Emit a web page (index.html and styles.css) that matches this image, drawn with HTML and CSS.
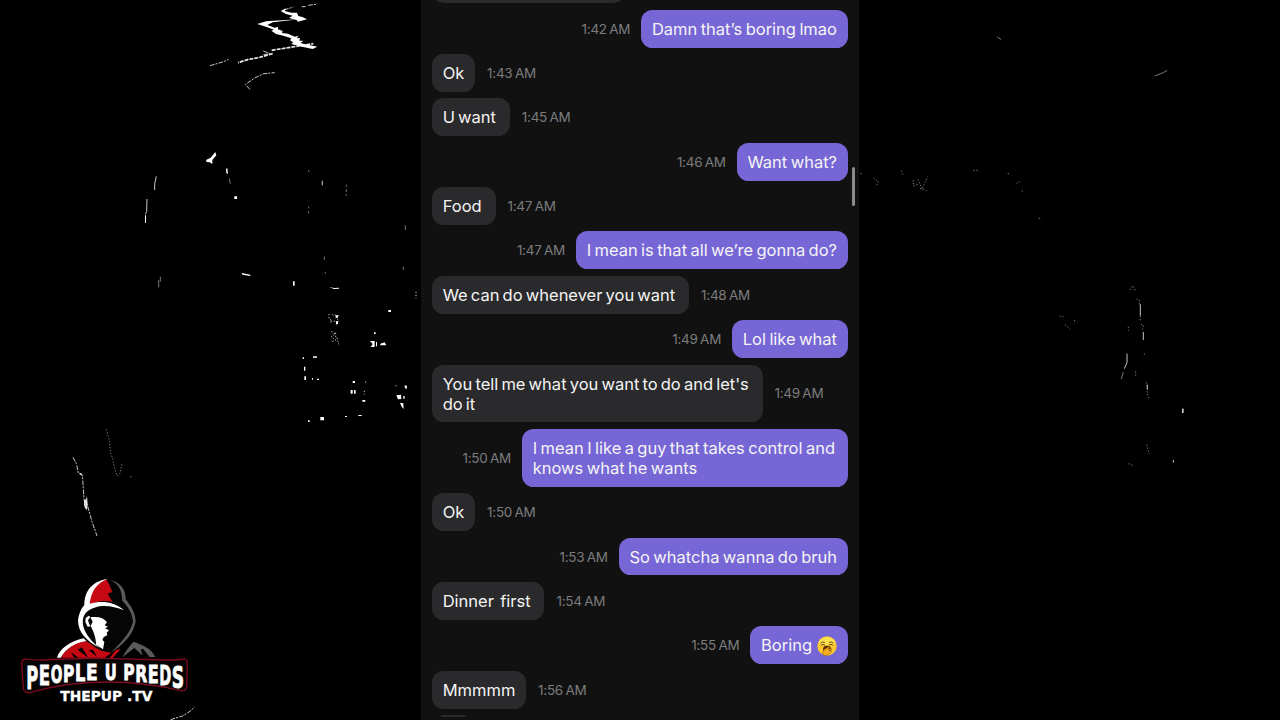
FILE: index.html
```html
<!DOCTYPE html>
<html lang="en">
<head>
  <meta charset="UTF-8">
  <meta name="viewport" content="width=device-width, initial-scale=1.0">
  <title>Chat</title>
  <link rel="stylesheet" href="styles.css">
</head>
<body>
  <svg class="sparks" viewBox="0 0 1280 720">
    <!-- top left lightning -->
    <g transform="translate(200 0) scale(.3333)">
      <path class="thin dash" d="M252 30l28-9M305 20h12M325 16l23-3M30 197l38-11 18-8M190 153l20 8-22 3M150 268l-14-14 28-20 28-13 32-3"/>
      <path class="thin bright" d="M218 161l-42 12-30 5-32 10M215 151l50-8 75-12"/>
      <path fill="#fff" d="M242 33l16-8-4 8 20 5 17 0 4 10 12 3 14 7-27 7-5-6-22-5 11-7-20-5zM172 72l26-8 60-4 40-2-80 9-16 8 22 8 10-2 0 7 14 5-2 6 18 2 20 9 12-3-6 8 10-1-2 8 12 0-8 7 8 2 42 9-14 7-32-7-32-8 6-5-10-6 4-6-24-8-22-5-14-10 8-3-20-7z"/>
    </g>
    <g transform="translate(130 140) scale(.3333)" fill="#fff">
      <path d="M228 60l14-7 14-17 3 10-12 14 0 12-8-5-9-1zM288 87l4-3 2 18-5-3zM313 169h8v8h-8zM335 399l26 5v4l-24-4zM489 424h5v13h-5z"/>
      <path class="thin" d="M79 109l-5 23v18M51 177l-1 38-4 8M577 122v14"/>
      <path class="faint" d="M298 116l3 15M649 134v6M649 148v8M649 162v5M536 90v5M536 200v5M536 214v6M826 256v14M820 380v10M583 350v10M586 396v5M86 420v22M91 410v15"/>
      <path d="M45 226h3v23h-3zM597 441l15 3 15-1v3l-15 1z"/>
    </g>
    <g transform="translate(290 290) scale(.3333)" fill="#fff">
      <path class="dots" d="M117 72v14l8 5-4 10M126 74l20 3-8 8 8 6-7 13M122 93l23 2M124 124l12 8-13 8 14 10-12 5M141 143l5 20M137 128v18M318 285v9M227 274v8M223 302v12M378 5v20"/>
      <path d="M137 76h7v7h-7zM138 94h6v8h-6zM240 153h14v18h-12l6-9zM258 156h3v13h-3zM271 161l13-4 5 9h-18zM252 127h5v5h-5zM295 60h8v6h-8zM38 202h4v5h-4zM69 199h12v4h-12zM42 230h4v12h-4zM43 259h5v11h-5zM81 266h6v4h-6zM66 264h3v5h-3zM188 273h7v6h-7zM182 300h6v11h-6zM192 300h5v11h-5zM217 330h9v5h-9zM205 375h10v3h-10zM165 378h6v3h-6zM91 381h11v10h-11zM54 391h5v5h-5zM344 286l7 1-1 10-5-2zM319 316l14-2 1 13-10 1zM340 318h4v8h-4zM330 338l10 2 1 17-6-7z"/>
    </g>
    <g transform="translate(60 420) scale(.3333)">
      <path class="thin dash" d="M39 112l10 18 6 30 12 5 3 40 2 35 10 15 14 50 15 43"/>
      <path fill="#fff" opacity=".85" d="M72 240l6-2 3-10 2 24-2 18-6-5-3-10zM58 158l7 2-1 7z"/>
      <path class="faint dots" d="M139 28l8 28 5 44 6 16 7 32 7 20 8-8 6-28M210 170h6"/>
    </g>
    <!-- right side -->
    <g transform="translate(850 0) scale(.3333)">
      <path class="faint" d="M442 111l12 8M914 228l26-10 12-7"/>
      <path class="faint dots" d="M22 521h18M71 535l15 9-8 15M154 512l4 12M190 540v18l14-5M204 538l12 30 17-38M210 566l20 6M370 511h16M500 550l10-6M515 573h7M566 655h10M473 521h8"/>
    </g>
    <g transform="translate(1040 260) scale(.3333)">
      <path class="thin" d="M301 133v34M310 216v24M261 281v27l-8 18M322 374v15M400 600v8"/>
      <path class="faint" d="M250 337l-6 20"/>
      <path class="faint dots" d="M270 90l8-13 9 16M290 117l8 3v14M301 168v17M303 193l8 4-5 13M265 200v12M313 280v9M287 334v14M319 367l4 38 5 12M320 554l8 28M266 611l12 5M58 168l12 2M75 194l16 13M104 180v10"/>
      <path fill="#ccc" d="M426 446h5v13h-5z"/>
    </g>
  </svg>

  <svg class="logo" viewBox="0 0 660 480">
    <path fill="#fff" d="M171 293c8-27 39-49 80-58l9 9c-35 5-60 21-78 49z"/>
    <path fill="#c60812" d="M183 293c18-28 42-45 76-49l14 8c18 16 36 23 52 24l38-10-25 28z"/>
    <path fill="#000" d="M213 276l22 17h-13zM245 262l20 31-32-24zM279 270l12 20-25-19zM350 268l-38 27h16z"/>
    <path fill="#5a5a5a" d="M367 292c10-18 20-33 34-47 28 11 53 19 65 46h-17l-20-25-7 3 7 18-26-23z"/>
    <path fill="#050505" d="M253 134c2-43 25-71 68-78 38 6 56 28 56 63 18 22 29 45 30 68-8 39-38 70-74 92l-16-5c-50-25-79-55-83-93 2-18 8-34 19-47z"/>
    <path fill="#c60812" d="M268 133c1-38 19-64 50-75l9 14 10 24-14 5 15 25c-25-6-47-3-67 8z"/>
    <path fill="#fff" d="M253 135c0-38 20-71 69-78-31 12-48 36-53 74 35-10 74-7 103 20-40-17-82-20-112 5-23 24-13 67 40 109-41-22-66-48-66-84 2-18 8-34 19-46z"/>
    <path fill="#5a5a5a" d="M331 60c32 8 46 28 46 58 18 22 29 42 30 67-8 40-38 70-74 92 27-27 57-55 66-92-2-25-13-43-32-63-2-30-8-49-36-62z"/>
    <path fill="#fff" d="M257 174l9-7 5 4-7 10 4 12 4 6-9 1-7-14zM271 172c24-4 40 1 50 15l-7 9 10 4-9 5 12 6-7 7 2 7-11 7-4 7 6 7-4 22-21-14c0-24-9-42-16-57l6-12z"/>
    <path class="badge" d="M78 297q6 3 52 3 130-6 180-5t192 5q38 0 48-3 13-2 12 16l-2 70q-3 12-18 9-104-26-222-26T92 397q-18 5-22-11l-5-74q0-15 13-15z"/>
    <text class="brand">
      <tspan x="79" y="386" textLength="36" lengthAdjust="spacingAndGlyphs" font-size="97">P</tspan><tspan x="116" y="374" textLength="34" lengthAdjust="spacingAndGlyphs" font-size="80">E</tspan><tspan x="152" y="369" textLength="35" lengthAdjust="spacingAndGlyphs" font-size="74">O</tspan><tspan x="189" y="366" textLength="34" lengthAdjust="spacingAndGlyphs" font-size="71">P</tspan><tspan x="225" y="363" textLength="31" lengthAdjust="spacingAndGlyphs" font-size="67">L</tspan><tspan x="258" y="360" textLength="35" lengthAdjust="spacingAndGlyphs" font-size="65">E</tspan>
      <tspan x="314" y="359" textLength="36" lengthAdjust="spacingAndGlyphs" font-size="65">U</tspan>
      <tspan x="370" y="361" textLength="34" lengthAdjust="spacingAndGlyphs" font-size="66">P</tspan><tspan x="406" y="365" textLength="36" lengthAdjust="spacingAndGlyphs" font-size="71">R</tspan><tspan x="443" y="370" textLength="33" lengthAdjust="spacingAndGlyphs" font-size="76">E</tspan><tspan x="478" y="376" textLength="36" lengthAdjust="spacingAndGlyphs" font-size="81">D</tspan><tspan x="515" y="385" textLength="37" lengthAdjust="spacingAndGlyphs" font-size="90">S</tspan>
    </text>
    <text class="site" x="181" y="424" textLength="276" lengthAdjust="spacingAndGlyphs">THEPUP .TV</text>
    <path class="thin dash" d="M512 479l35-11 20-12 17-15"/>
  </svg>

  <main class="chat">
    <div class="messages">
      <div class="row"><div class="bubble cut"></div></div>
      <div class="row me"><div class="bubble">Damn that’s boring lmao</div><time>1:42 AM</time></div>
      <div class="row"><div class="bubble">Ok</div><time>1:43 AM</time></div>
      <div class="row"><div class="bubble">U want&nbsp;</div><time>1:45 AM</time></div>
      <div class="row me"><div class="bubble">Want what?</div><time>1:46 AM</time></div>
      <div class="row"><div class="bubble">Food&nbsp;</div><time>1:47 AM</time></div>
      <div class="row me"><div class="bubble">I mean is that all we’re gonna do?</div><time>1:47 AM</time></div>
      <div class="row"><div class="bubble">We can do whenever you want&nbsp;</div><time>1:48 AM</time></div>
      <div class="row me"><div class="bubble">Lol like what</div><time>1:49 AM</time></div>
      <div class="row"><div class="bubble wide">You tell me what you want to do and let's<br>do it</div><time>1:49 AM</time></div>
      <div class="row me"><div class="bubble wide">I mean I like a guy that takes control and<br>knows what he wants</div><time>1:50 AM</time></div>
      <div class="row"><div class="bubble">Ok</div><time>1:50 AM</time></div>
      <div class="row me"><div class="bubble">So whatcha wanna do bruh</div><time>1:53 AM</time></div>
      <div class="row"><div class="bubble">Dinner&nbsp; first&nbsp;</div><time>1:54 AM</time></div>
      <div class="row me">
        <div class="bubble">Boring <svg class="yawn" viewBox="0 0 20 20">
          <circle cx="10" cy="10" r="9.7" fill="#fbc92c"/>
          <path d="M2 5Q10-3 18 5L17 9H3z" fill="#ffe04e"/>
          <path d="M3.5 7.5Q5 5 7.8 6.5M12.2 6.5Q15 5 16.5 7.5M4 9.3Q6 7.5 8 9M12 9q2-1.5 4 .3" fill="none" stroke="#5b3610" stroke-width=".9"/>
          <ellipse cx="10" cy="13.2" rx="4" ry="3.4" fill="#5b2c0c"/>
          <path d="M5.5 18l1-4 5-3.2 1 .7-1.7 1.7 3.5-1 .4 1-2.6 1.4 2.4.2-.2 1.1-3.3 3.1-3.5.6z" fill="#f6ad22" stroke="#85500e" stroke-width=".5"/>
        </svg></div><time>1:55 AM</time></div>
      <div class="row"><div class="bubble">Mmmmm</div><time>1:56 AM</time></div>
      <div class="row"><div class="bubble cut short"></div></div>
    </div>
    <div class="scrollbar"></div>
  </main>
</body>
</html>
```
FILE: styles.css
```css
body {
  margin: 0;
  height: 720px;
  overflow: hidden;
  background: #000;
  font-family: Inter, "Liberation Sans", sans-serif;
}

/* backdrop */
.sparks {
  position: absolute;
  top: 0;
  left: 0;
  width: 1280px;
  height: 720px;
}
.thin {
  fill: none;
  stroke: #c8c8c8;
  stroke-width: 3;
}
.bright {
  stroke: #e8e8e8;
  stroke-width: 5;
  stroke-dasharray: 12 3;
}
.faint {
  fill: none;
  stroke: #777;
  stroke-width: 3;
}
.dash {
  stroke-dasharray: 14 3 6 4;
}
.dots {
  fill: none;
  stroke-dasharray: 4 5;
}
path.dots:not(.faint) {
  stroke: #bbb;
  stroke-width: 3;
}

.logo {
  position: absolute;
  left: 0;
  bottom: 0;
  width: 220px;
  height: 160px;
}
.badge {
  fill: #080506;
  stroke: #7c0a20;
  stroke-width: 4;
}
.brand, .site {
  font-family: "DejaVu Sans", sans-serif;
  font-weight: bold;
  fill: #fff;
  stroke: #fff;
  stroke-width: 2.5;
}
.site {
  font-size: 43px;
  stroke-width: 1;
}

/* conversation */
.chat {
  position: relative;
  box-sizing: border-box;
  width: 438px;
  height: 720px;
  margin: 0 auto 0 421px;
  padding: 0 11px;
  overflow: hidden;
  background: #111;
}
.messages {
  display: flex;
  flex-direction: column;
  gap: 6.55px;
  margin-top: -34.6px;
}
.row {
  display: flex;
  align-items: center;
  gap: 12px;
  flex-shrink: 0;
}
.row.me {
  flex-direction: row-reverse;
  gap: 11px;
}
.bubble {
  box-sizing: border-box;
  min-height: 37.8px;
  padding: 9px 10.7px 8.7px;
  border-radius: 11.5px;
  background: #2a2a2c;
  color: #f4f4f4;
  font-size: 16.5px;
  line-height: 20.1px;
  word-spacing: -1.5px;
  white-space: nowrap;
}
.me .bubble {
  padding-right: 11px;
  background: #7766d6;
  word-spacing: -1.25px;
}
.bubble.cut {
  width: 193px;
}
.bubble.short {
  width: 43px;
  min-height: 2px;
  height: 2px;
  padding: 0;
  border-radius: 0;
  background: linear-gradient(90deg, transparent 8px, #2a2a2c 10px 32px, transparent 35px);
}
.bubble.wide {
  width: 330.5px;
}
.me .bubble.wide {
  width: 326px;
}
time {
  color: #7c7c7e;
  font-size: 13.5px;
  letter-spacing: -.28px;
  word-spacing: -1px;
  white-space: nowrap;
}
.yawn {
  display: inline-block;
  width: 20px;
  height: 20px;
  margin: -2px 0 -2px 1.5px;
  vertical-align: -3px;
}
.scrollbar {
  position: absolute;
  top: 167px;
  right: 4px;
  width: 3px;
  height: 39px;
  border-radius: 2px;
  background: #8b8b8b;
}
```
